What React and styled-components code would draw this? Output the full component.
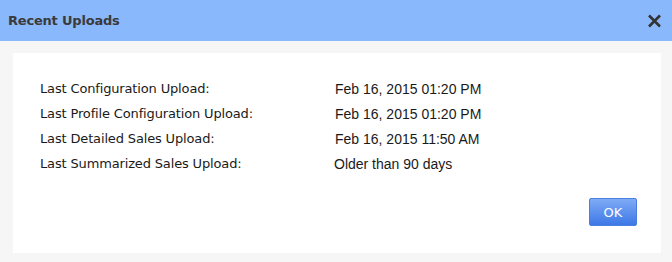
import styled, { createGlobalStyle } from "styled-components";

const Global = createGlobalStyle`
  html, body {
    margin: 0;
    padding: 0;
    background: #f6f6f6;
  }
`;

const Dialog = styled.div`
  width: 672px;
  height: 262px;
  background: #f6f6f6;
  display: flex;
  flex-direction: column;
`;

const Header = styled.div`
  height: 41px;
  background: #8ab8fc;
  display: flex;
  align-items: center;
  justify-content: space-between;
  padding: 0 10px 0 8px;
  box-sizing: border-box;
`;

const Title = styled.h1`
  margin: 0;
  font-family: "DejaVu Sans", Verdana, sans-serif;
  font-size: 13px;
  font-weight: bold;
  color: #3a3a3a;
  letter-spacing: -0.2px;
`;

const Close = styled.button`
  border: none;
  background: none;
  padding: 0;
  width: 16px;
  height: 16px;
  cursor: pointer;
  display: flex;
  align-items: center;
  justify-content: center;
`;

const Panel = styled.div`
  margin: 12px 11px 9px 13px;
  flex: 1;
  background: #fff;
  padding: 23px 0 0 27px;
  display: flex;
  flex-direction: column;
`;

const Rows = styled.div`
  display: grid;
  grid-template-columns: 295px auto;
  grid-auto-rows: 25px;
  align-items: center;
`;

const Label = styled.div`
  font-family: "DejaVu Sans", Verdana, sans-serif;
  font-size: 13px;
  letter-spacing: -0.15px;
  color: #1a1a1a;
`;

const Value = styled.div`
  font-family: "Liberation Sans", Arial, sans-serif;
  font-size: 14px;
  color: #1a1a1a;
  margin-left: ${({ $shift }) => $shift || 0}px;
`;

const Footer = styled.div`
  display: flex;
  justify-content: flex-end;
  padding-right: 24px;
  margin-top: 22px;
`;

const OkButton = styled.button`
  width: 48px;
  height: 28px;
  border: 1px solid #4a7fe0;
  border-radius: 2px;
  background: linear-gradient(#7fabf6, #3d78e6);
  color: #fff;
  font-family: "DejaVu Sans", Verdana, sans-serif;
  font-size: 13px;
  cursor: pointer;
`;

const rows = [
  ["Last Configuration Upload:", "Feb 16, 2015 01:20 PM"],
  ["Last Profile Configuration Upload:", "Feb 16, 2015 01:20 PM"],
  ["Last Detailed Sales Upload:", "Feb 16, 2015 11:50 AM"],
  ["Last Summarized Sales Upload:", "Older than 90 days", -1],
];

export default function App() {
  return (
    <>
      <Global />
      <Dialog>
        <Header>
          <Title>Recent Uploads</Title>
          <Close aria-label="Close">
            <svg width="15" height="14" viewBox="0 0 15 14">
              <path d="M2 1.5 L13 12.5 M13 1.5 L2 12.5" stroke="#333" strokeWidth="2.6" />
            </svg>
          </Close>
        </Header>
        <Panel>
          <Rows>
            {rows.map(([l, v, s]) => (
              <>
                <Label key={l}>{l}</Label>
                <Value key={v + l} $shift={s}>{v}</Value>
              </>
            ))}
          </Rows>
          <Footer>
            <OkButton>OK</OkButton>
          </Footer>
        </Panel>
      </Dialog>
    </>
  );
}
